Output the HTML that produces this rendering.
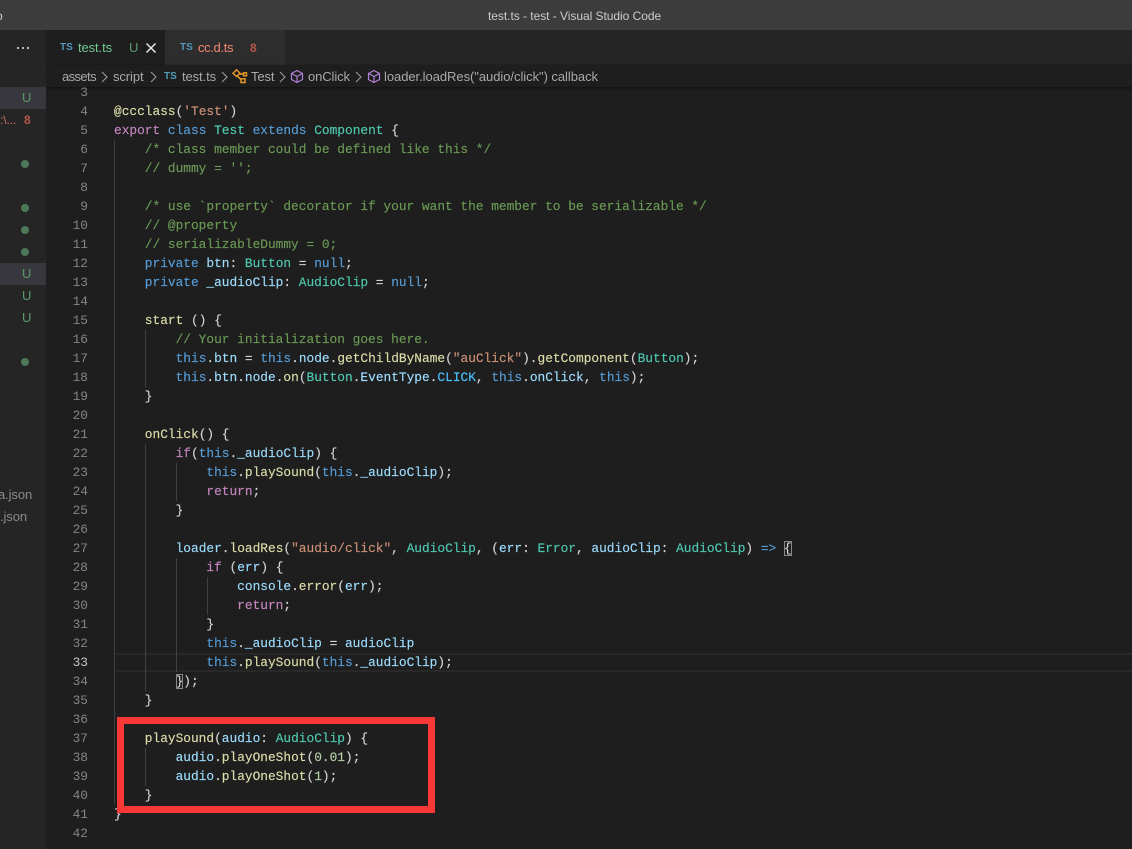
<!DOCTYPE html>
<html><head><meta charset="utf-8"><style>
html,body{margin:0;padding:0;background:#1e1e1e;width:1132px;height:849px;overflow:hidden}
.a{position:absolute;white-space:pre}
.ui{font-family:"Liberation Sans",sans-serif;font-size:13px;line-height:20px;letter-spacing:-.1px}
.l{position:absolute;left:114px;height:19px;line-height:19px;font-family:"Liberation Mono",monospace;font-size:12.83px;white-space:pre;color:#d4d4d4;-webkit-text-stroke:.15px currentColor}
.n{position:absolute;left:60px;width:28px;text-align:right;height:19px;line-height:19px;font-family:"Liberation Mono",monospace;font-size:12.83px;color:#858585}
.g{position:absolute;width:1px;background:#404040}
.k{color:#569cd6}.p{color:#c586c0}.t{color:#4ec9b0}.v{color:#9cdcfe}.f{color:#dcdcaa}.s{color:#ce9178}.c{color:#6a9955}.m{color:#b5cea8}.u{color:#4fc1ff}.y,.o,.b{color:#d4d4d4}
.dot{position:absolute;left:21px;width:8px;height:8px;border-radius:50%;background:#4c7a58}
.U{position:absolute;left:22px;color:#5c9a6c;font:13px/20px "Liberation Sans",sans-serif}
</style></head><body>
<div class="a" style="left:0;top:0;width:1132px;height:30px;background:#3c3c3c"></div>
<div class="a ui" style="left:-4px;top:6px;color:#ccc;font-size:12px">o</div>
<div class="a ui" style="left:488px;top:6px;color:#ccc;font-size:12px;letter-spacing:-.04px">test.ts - test - Visual Studio Code</div>

<div class="a" style="left:46px;top:30px;width:1086px;height:35px;background:#252526"></div>
<div class="a" style="left:46px;top:30px;width:119px;height:35px;background:#1e1e1e"></div>
<div class="a" style="left:165px;top:30px;width:120px;height:35px;background:#2d2d2d"></div>

<div class="a" style="left:60px;top:43px;color:#519aba;font:bold 10px/10px 'Liberation Sans',sans-serif">TS</div>
<div class="a ui" style="left:78px;top:38px;color:#73c991">test.ts</div>
<div class="a ui" style="left:129px;top:38px;color:#5c9a6c">U</div>
<svg class="a" style="left:145px;top:42px" width="12" height="12" viewBox="0 0 12 12"><path d="M1.5 1.5L10.5 10.5M10.5 1.5L1.5 10.500" stroke="#e8e8e8" stroke-width="1.5" fill="none"/></svg>
<div class="a" style="left:180px;top:43px;color:#519aba;font:bold 10px/10px 'Liberation Sans',sans-serif">TS</div>
<div class="a ui" style="left:198px;top:38px;color:#f48771;letter-spacing:-.35px">cc.d.ts</div>
<div class="a ui" style="left:250px;top:38px;color:#b5574a;font-weight:bold;font-size:12px">8</div>

<div class="a" style="left:46px;top:65px;width:1086px;height:22px;background:#1e1e1e;box-shadow:0 1px 3px #0008"></div>
<div class="a ui" style="left:62px;top:67px;color:#a9a9a9;letter-spacing:-.6px">assets</div>
<svg class="a" style="left:100px;top:70px" width="10" height="14"><path d="M2 2l5 5-5 5" stroke="#a0a0a0" fill="none"/></svg>
<div class="a ui" style="left:113px;top:67px;color:#a9a9a9">script</div>
<svg class="a" style="left:149px;top:70px" width="10" height="14"><path d="M2 2l5 5-5 5" stroke="#a0a0a0" fill="none"/></svg>
<div class="a" style="left:164px;top:72px;color:#519aba;font:bold 10px/10px 'Liberation Sans',sans-serif">TS</div>
<div class="a ui" style="left:182px;top:67px;color:#a9a9a9">test.ts</div>
<svg class="a" style="left:220px;top:70px" width="10" height="14"><path d="M2 2l5 5-5 5" stroke="#a0a0a0" fill="none"/></svg>
<svg class="a" style="left:232px;top:69px" width="16" height="15" viewBox="0 0 16 15"><path d="M4.500 .800L8 4.200L4.500 7.500L1 4.200ZM7.500 5H11.500M5.500 7L8.800 10.500M11.500 3.800H14.500V6.800H11.500ZM9 9.800H13V13.500H9Z" stroke="#ee9d28" stroke-width="1.400" fill="none"/></svg>
<div class="a ui" style="left:251px;top:67px;color:#a9a9a9">Test</div>
<svg class="a" style="left:278px;top:70px" width="10" height="14"><path d="M2 2l5 5-5 5" stroke="#a0a0a0" fill="none"/></svg>
<svg class="a" style="left:290px;top:69px" width="14" height="15" viewBox="0 0 14 15"><path d="M7 1.500L12.500 4.500V10.500L7 13.500L1.500 10.500V4.500ZM1.500 4.500L7 7.500L12.500 4.500M7 7.500V13.500" stroke="#b180d7" stroke-width="1.200" fill="none"/></svg>
<div class="a ui" style="left:308px;top:67px;color:#a9a9a9">onClick</div>
<svg class="a" style="left:354px;top:70px" width="10" height="14"><path d="M2 2l5 5-5 5" stroke="#a0a0a0" fill="none"/></svg>
<svg class="a" style="left:367px;top:69px" width="14" height="15" viewBox="0 0 14 15"><path d="M7 1.500L12.500 4.500V10.500L7 13.500L1.500 10.500V4.500ZM1.500 4.500L7 7.500L12.500 4.500M7 7.500V13.500" stroke="#b180d7" stroke-width="1.200" fill="none"/></svg>
<div class="a ui" style="left:384px;top:67px;color:#a9a9a9;letter-spacing:-.05px">loader.loadRes("audio/click") callback</div>

<!-- sidebar -->
<div class="a" style="left:0;top:30px;width:46px;height:819px;background:#252526"></div>
<svg class="a" style="left:16px;top:46px" width="14" height="4"><circle cx="2" cy="2" r="1.100" fill="#ccc"/><circle cx="7" cy="2" r="1.100" fill="#ccc"/><circle cx="12" cy="2" r="1.100" fill="#ccc"/></svg>
<div class="a" style="left:0;top:87px;width:46px;height:22px;background:#37373d"></div>
<div class="a" style="left:0;top:263px;width:46px;height:22px;background:#37373d"></div>
<div class="U" style="top:88px">U</div>
<div class="a ui" style="left:0;top:110px;color:#d2715f;font-size:12px">:\...</div>
<div class="a ui" style="left:24px;top:110px;color:#b5574a;font-weight:bold;font-size:12px">8</div>
<div class="dot" style="top:160px"></div><div class="dot" style="top:204px"></div><div class="dot" style="top:226px"></div><div class="dot" style="top:248px"></div><div class="dot" style="top:358px"></div>
<div class="U" style="top:264px">U</div><div class="U" style="top:286px">U</div><div class="U" style="top:308px">U</div>
<div class="a ui" style="left:-2px;top:485px;color:#8a8a8a">a.json</div>
<div class="a ui" style="left:0;top:507px;color:#8a8a8a">.json</div>

<!-- current line -->
<div class="a" style="left:115px;top:653px;width:1017px;height:15px;border-top:2px solid #282828;border-bottom:2px solid #282828"></div>

<!-- indent guides -->
<div class="g" style="left:114px;top:140px;height:665px"></div>
<div class="g" style="left:145px;top:330px;height:57px"></div>
<div class="g" style="left:145px;top:444px;height:247px"></div>
<div class="g" style="left:176px;top:463px;height:38px"></div>
<div class="g" style="left:176px;top:558px;height:114px"></div>
<div class="g" style="left:207px;top:577px;height:38px"></div>
<div class="g" style="left:145px;top:748px;height:38px"></div>

<!-- line numbers -->
<div class="n" style="top:83px">3</div><div class="n" style="top:102px">4</div><div class="n" style="top:121px">5</div><div class="n" style="top:140px">6</div><div class="n" style="top:159px">7</div><div class="n" style="top:178px">8</div><div class="n" style="top:197px">9</div><div class="n" style="top:216px">10</div><div class="n" style="top:235px">11</div><div class="n" style="top:254px">12</div><div class="n" style="top:273px">13</div><div class="n" style="top:292px">14</div><div class="n" style="top:311px">15</div><div class="n" style="top:330px">16</div><div class="n" style="top:349px">17</div><div class="n" style="top:368px">18</div><div class="n" style="top:387px">19</div><div class="n" style="top:406px">20</div><div class="n" style="top:425px">21</div><div class="n" style="top:444px">22</div><div class="n" style="top:463px">23</div><div class="n" style="top:482px">24</div><div class="n" style="top:501px">25</div><div class="n" style="top:520px">26</div><div class="n" style="top:539px">27</div><div class="n" style="top:558px">28</div><div class="n" style="top:577px">29</div><div class="n" style="top:596px">30</div><div class="n" style="top:615px">31</div><div class="n" style="top:634px">32</div><div class="n" style="top:653px;color:#c6c6c6">33</div><div class="n" style="top:672px">34</div><div class="n" style="top:691px">35</div><div class="n" style="top:710px">36</div><div class="n" style="top:729px">37</div><div class="n" style="top:748px">38</div><div class="n" style="top:767px">39</div><div class="n" style="top:786px">40</div><div class="n" style="top:805px">41</div><div class="n" style="top:824px">42</div>

<!-- code -->
<div class="l" style="top:102px"><span class="f">@ccclass</span><span class="y">(</span><span class="s">'Test'</span><span class="y">)</span></div>
<div class="l" style="top:121px"><span class="p">export</span> <span class="k">class</span> <span class="t">Test</span> <span class="k">extends</span> <span class="t">Component</span> <span class="y">{</span></div>
<div class="l c" style="top:140px">    /* class member could be defined like this */</div>
<div class="l c" style="top:159px">    // dummy = '';</div>
<div class="l c" style="top:197px">    /* use `property` decorator if your want the member to be serializable */</div>
<div class="l c" style="top:216px">    // @property</div>
<div class="l c" style="top:235px">    // serializableDummy = 0;</div>
<div class="l" style="top:254px">    <span class="k">private</span> <span class="v">btn</span>: <span class="t">Button</span> = <span class="k">null</span>;</div>
<div class="l" style="top:273px">    <span class="k">private</span> <span class="v">_audioClip</span>: <span class="t">AudioClip</span> = <span class="k">null</span>;</div>
<div class="l" style="top:311px">    <span class="f">start</span> <span class="o">()</span> <span class="o">{</span></div>
<div class="l c" style="top:330px">        // Your initialization goes here.</div>
<div class="l" style="top:349px">        <span class="k">this</span>.<span class="v">btn</span> = <span class="k">this</span>.<span class="v">node</span>.<span class="f">getChildByName</span><span class="y">(</span><span class="s">"auClick"</span><span class="y">)</span>.<span class="f">getComponent</span><span class="y">(</span><span class="t">Button</span><span class="y">)</span>;</div>
<div class="l" style="top:368px">        <span class="k">this</span>.<span class="v">btn</span>.<span class="v">node</span>.<span class="f">on</span><span class="y">(</span><span class="t">Button</span>.<span class="v">EventType</span>.<span class="u">CLICK</span>, <span class="k">this</span>.<span class="v">onClick</span>, <span class="k">this</span><span class="y">)</span>;</div>
<div class="l" style="top:387px">    <span class="o">}</span></div>
<div class="l" style="top:425px">    <span class="f">onClick</span><span class="o">()</span> <span class="o">{</span></div>
<div class="l" style="top:444px">        <span class="p">if</span><span class="b">(</span><span class="k">this</span>.<span class="v">_audioClip</span><span class="b">)</span> <span class="b">{</span></div>
<div class="l" style="top:463px">            <span class="k">this</span>.<span class="f">playSound</span><span class="y">(</span><span class="k">this</span>.<span class="v">_audioClip</span><span class="y">)</span>;</div>
<div class="l" style="top:482px">            <span class="p">return</span>;</div>
<div class="l" style="top:501px">        <span class="b">}</span></div>
<div class="l" style="top:539px">        <span class="v">loader</span>.<span class="f">loadRes</span><span class="b">(</span><span class="s">"audio/click"</span>, <span class="t">AudioClip</span>, <span class="y">(</span><span class="v">err</span>: <span class="t">Error</span>, <span class="v">audioClip</span>: <span class="t">AudioClip</span><span class="y">)</span> <span class="k">=&gt;</span> <span class="y" style="outline:1px solid #888;outline-offset:-1px">{</span></div>
<div class="l" style="top:558px">            <span class="p">if</span> <span class="b">(</span><span class="v">err</span><span class="b">)</span> <span class="b">{</span></div>
<div class="l" style="top:577px">                <span class="v">console</span>.<span class="f">error</span><span class="y">(</span><span class="v">err</span><span class="y">)</span>;</div>
<div class="l" style="top:596px">                <span class="p">return</span>;</div>
<div class="l" style="top:615px">            <span class="b">}</span></div>
<div class="l" style="top:634px">            <span class="k">this</span>.<span class="v">_audioClip</span> = <span class="v">audioClip</span></div>
<div class="l" style="top:653px">            <span class="k">this</span>.<span class="f">playSound</span><span class="b">(</span><span class="k">this</span>.<span class="v">_audioClip</span><span class="b">)</span>;</div>
<div class="l" style="top:672px">        <span class="y" style="outline:1px solid #888;outline-offset:-1px">}</span><span class="b">)</span>;</div>
<div class="l" style="top:691px">    <span class="o">}</span></div>
<div class="l" style="top:729px">    <span class="f">playSound</span><span class="o">(</span><span class="v">audio</span>: <span class="t">AudioClip</span><span class="o">)</span> <span class="o">{</span></div>
<div class="l" style="top:748px">        <span class="v">audio</span>.<span class="f">playOneShot</span><span class="b">(</span><span class="m">0.01</span><span class="b">)</span>;</div>
<div class="l" style="top:767px">        <span class="v">audio</span>.<span class="f">playOneShot</span><span class="b">(</span><span class="m">1</span><span class="b">)</span>;</div>
<div class="l" style="top:786px">    <span class="o">}</span></div>
<div class="l" style="top:805px"><span class="y">}</span></div>

<!-- red box -->
<div class="a" style="left:117px;top:717px;width:304px;height:82px;border:7px solid #f83737"></div>
</body></html>
